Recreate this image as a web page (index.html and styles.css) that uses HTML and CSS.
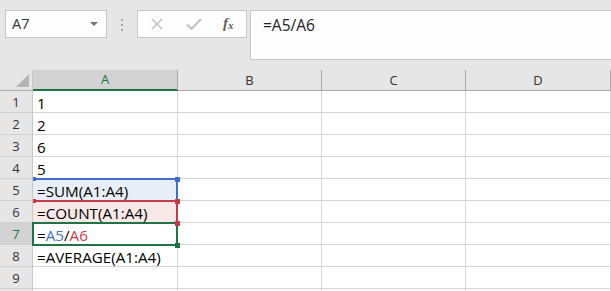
FILE: index.html
```html
<!DOCTYPE html>
<html>
<head>
<meta charset="utf-8">
<link rel="stylesheet" href="styles.css">
</head>
<body>
<div class="topbar">
  <div class="namebox">
    <span class="name">A7</span>
    <span class="caret"></span>
  </div>
  <div class="grip"><i></i><i></i><i></i></div>
  <div class="btns">
    <svg class="ico-x" width="12" height="12" viewBox="0 0 12 12"><path d="M1 1L11 11M11 1L1 11" stroke="#c3c3c3" stroke-width="1.6" fill="none"/></svg>
    <svg class="ico-ok" width="16" height="12" viewBox="0 0 16 12"><path d="M1 6.5L5.5 11L15 1" stroke="#c3c3c3" stroke-width="2" fill="none"/></svg>
    <span class="fx">f<sub>x</sub></span>
  </div>
  <div class="formula">=A5/A6</div>
</div>
<div class="sheet">
  <div class="corner"><span class="tri"></span></div>
  <div class="ch sel">A</div>
  <div class="ch">B</div>
  <div class="ch">C</div>
  <div class="ch">D</div>
  <div class="ch last"></div>

  <div class="rh">1</div><div class="c">1</div><div class="c"></div><div class="c"></div><div class="c"></div><div class="c last"></div>
  <div class="rh">2</div><div class="c">2</div><div class="c"></div><div class="c"></div><div class="c"></div><div class="c last"></div>
  <div class="rh">3</div><div class="c">6</div><div class="c"></div><div class="c"></div><div class="c"></div><div class="c last"></div>
  <div class="rh">4</div><div class="c">5</div><div class="c"></div><div class="c"></div><div class="c"></div><div class="c last"></div>
  <div class="rh">5</div><div class="c ref-blue">=SUM(A1:A4)</div><div class="c"></div><div class="c"></div><div class="c"></div><div class="c last"></div>
  <div class="rh">6</div><div class="c ref-red">=COUNT(A1:A4)</div><div class="c"></div><div class="c"></div><div class="c"></div><div class="c last"></div>
  <div class="rh sel">7</div><div class="c">=<span class="t-blue">A5</span>/<span class="t-red">A6</span></div><div class="c"></div><div class="c"></div><div class="c"></div><div class="c last"></div>
  <div class="rh">8</div><div class="c">=AVERAGE(A1:A4)</div><div class="c"></div><div class="c"></div><div class="c"></div><div class="c last"></div>
  <div class="rh">9</div><div class="c"></div><div class="c"></div><div class="c"></div><div class="c"></div><div class="c last"></div>
  <div class="rh"></div><div class="c"></div><div class="c"></div><div class="c"></div><div class="c"></div><div class="c last"></div>

  <div class="box box-blue"></div>
  <div class="box box-red"></div>
  <div class="box box-green"></div>
  <span class="h h-blue h-tl1"></span>
  <span class="h h-blue h-tr1"></span>
  <span class="h h-red h-tl2"></span>
  <span class="h h-red h-tr2"></span>
  <span class="h h-red h-br2"></span>
  <span class="h h-green h-br3"></span>
</div>
</body>
</html>
```
FILE: styles.css
```css
html, body {
  margin: 0;
  padding: 0;
  background: #e6e6e6;
  font-family: "Open Sans", "Noto Sans", sans-serif;
  overflow: hidden;
}
.topbar {
  display: flex;
  align-items: flex-start;
  padding-top: 10px;
  height: 50px;
}
.namebox {
  margin-left: 5px;
  width: 102px;
  height: 28px;
  box-sizing: border-box;
  border: 1px solid #c6c6c6;
  background: #fdfdfd;
  display: flex;
  align-items: center;
  justify-content: space-between;
  padding: 0 6px 0 6px;
}
.name {
  font-size: 14.5px;
  color: #333;
  line-height: 18px;
}
.caret {
  width: 0;
  height: 0;
  border-left: 4px solid transparent;
  border-right: 4px solid transparent;
  border-top: 4px solid #777;
  margin-right: 2px;
}
.grip {
  margin-left: 14px;
  width: 2px;
  padding-top: 9px;
  display: flex;
  flex-direction: column;
  gap: 3px;
}
.grip i {
  display: block;
  width: 2px;
  height: 2px;
  background: #a6a6a6;
}
.btns {
  margin-left: 14px;
  width: 110px;
  height: 28px;
  box-sizing: border-box;
  border: 1px solid #c6c6c6;
  background: #fdfdfd;
  display: flex;
  align-items: center;
  padding-left: 13px;
}
.ico-ok {
  margin-left: 23px;
}
.fx {
  margin-left: 21px;
  font-family: "Liberation Serif", serif;
  font-style: italic;
  font-weight: bold;
  font-size: 15px;
  color: #606060;
  line-height: 16px;
}
.fx sub {
  font-size: 11px;
  vertical-align: -1px;
}
.formula {
  margin-left: 3px;
  flex: 1;
  height: 50px;
  box-sizing: border-box;
  border: 1px solid #c6c6c6;
  border-right: none;
  background: #fdfdfd;
  font-size: 15.5px;
  color: #222;
  padding: 5px 0 0 12px;
  line-height: 18px;
}
.sheet {
  position: relative;
  margin-top: 10px;
  display: grid;
  grid-template-columns: 33px 145px 144px 144px 145px 1fr;
  grid-template-rows: 21px;
  grid-auto-rows: 22px;
  background: #fff;
}
.corner, .ch, .rh, .c {
  box-sizing: border-box;
}
.corner {
  background: #e6e6e6;
  border-right: 1px solid #c8c8c8;
  border-bottom: 1px solid #ababab;
  position: relative;
}
.tri {
  position: absolute;
  right: 3px;
  bottom: 3px;
  width: 0;
  height: 0;
  border-left: 13px solid transparent;
  border-bottom: 13px solid #b4b4b4;
}
.ch {
  background: #e6e6e6;
  border-right: 1px solid #ababab;
  border-bottom: 1px solid #ababab;
  font-size: 13px;
  color: #333;
  text-align: center;
  line-height: 20px;
}
.ch.sel {
  background: #d2d2d2;
  color: #217346;
  border-bottom: 2px solid #217346;
  line-height: 19px;
}
.ch.last {
  border-right: none;
}
.rh {
  background: #e6e6e6;
  border-right: 1px solid #c8c8c8;
  border-bottom: 1px solid #d0d0d0;
  font-size: 13px;
  color: #333;
  text-align: center;
  padding-top: 2px;
  line-height: 19px;
}
.rh.sel {
  background: #d2d2d2;
  color: #217346;
}
.c {
  border-right: 1px solid #d4d4d4;
  border-bottom: 1px solid #d4d4d4;
  font-size: 15.2px;
  color: #000;
  padding: 3px 0 0 4px;
  line-height: 18px;
  white-space: nowrap;
}
.c.last {
  border-right: none;
}
.ref-blue {
  background: #e8eef8;
}
.ref-red {
  background: #f9e8e8;
}
.t-blue {
  color: #4472c4;
}
.t-red {
  color: #cc3a4b;
}
.box {
  position: absolute;
  box-sizing: border-box;
}
.box-blue {
  left: 33px;
  top: 108px;
  width: 145px;
  height: 23px;
  border-top: 2px solid #3f6fc6;
  border-right: 2px solid #3f6fc6;
}
.box-red {
  left: 33px;
  top: 130px;
  width: 145px;
  height: 23px;
  border-top: 2px solid #c43a48;
  border-right: 2px solid #c43a48;
}
.box-green {
  left: 32px;
  top: 152px;
  width: 146px;
  height: 24px;
  border: 2px solid #217346;
}
.h {
  position: absolute;
  width: 5px;
  height: 5px;
}
.h-blue { background: #3f6fc6; }
.h-red { background: #c43a48; }
.h-green { background: #217346; }
.h-tl1 { left: 33px; top: 107px; width: 3px; height: 4px; }
.h-tr1 { left: 175px; top: 107px; }
.h-tl2 { left: 33px; top: 129px; width: 3px; height: 4px; }
.h-tr2 { left: 175px; top: 129px; }
.h-br2 { left: 175px; top: 151px; }
.h-br3 { left: 175px; top: 173px; }
```
